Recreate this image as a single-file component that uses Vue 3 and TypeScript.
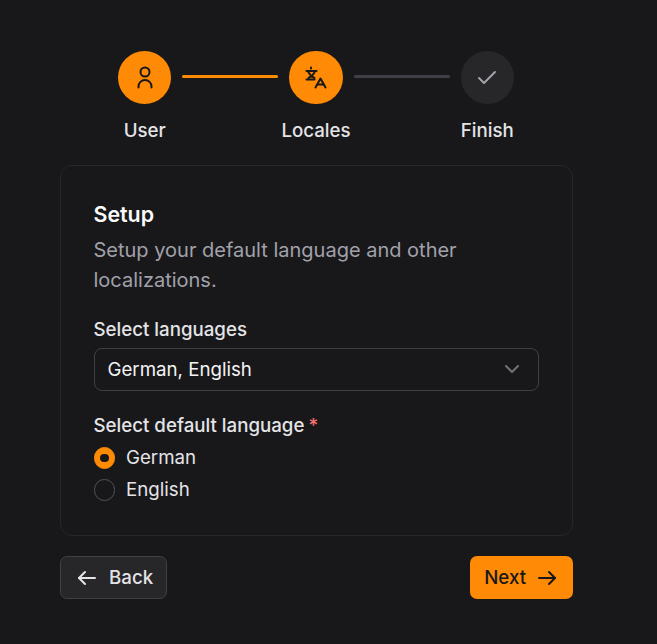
<script setup lang="ts">
const steps = ['User', 'Locales', 'Finish']
</script>

<template>
  <div class="page">
    <div class="stepper">
      <div class="step">
        <div class="circle active">
          <svg width="24" height="24" viewBox="0 0 24 24" fill="none" stroke="currentColor" stroke-width="2" stroke-linecap="round" stroke-linejoin="round">
            <circle cx="12" cy="6" r="4.5" />
            <path d="M5.5 21.5v-1a6.5 6.5 0 0 1 13 0v1" />
          </svg>
        </div>
        <span class="label">{{ steps[0] }}</span>
      </div>
      <div class="line done"></div>
      <div class="step">
        <div class="circle active">
          <svg width="24" height="24" viewBox="0 0 24 24" fill="none" stroke="currentColor" stroke-width="2" stroke-linecap="round" stroke-linejoin="round">
            <path d="M7 1.5v1" /><path d="M2.5 5h10" /><path d="M4.5 6.5c1.5 2.5 3.5 4.5 6 5.5" /><path d="M10.5 6.5c-1.5 2.5-3.500 4.500-6 5.500" /><path d="M2.500 13.500h8" />
            <path d="m11.500 21.500 5-9 5 9" /><path d="M13.500 18.500h6" />
          </svg>
        </div>
        <span class="label">{{ steps[1] }}</span>
      </div>
      <div class="line"></div>
      <div class="step">
        <div class="circle idle">
          <svg width="24" height="24" viewBox="0 0 24 24" fill="none" stroke="currentColor" stroke-width="2" stroke-linecap="round" stroke-linejoin="round">
            <path d="M20 6 9 17l-5-5" />
          </svg>
        </div>
        <span class="label">{{ steps[2] }}</span>
      </div>
    </div>

    <section class="card">
      <h2 class="title">Setup</h2>
      <p class="desc">Setup your default language and other localizations.</p>
      <div class="field">
        <div class="field-label">Select languages</div>
        <div class="select">
          <span>German, English</span>
          <svg width="24" height="24" viewBox="0 0 24 24" fill="none" stroke="currentColor" stroke-width="2" stroke-linecap="round" stroke-linejoin="round">
            <path d="m6 9 6 6 6-6" />
          </svg>
        </div>
      </div>
      <div class="field-label radio-head">Select default language<span class="req">*</span></div>
      <div class="radios">
        <div class="radio-row"><span class="radio on"></span>German</div>
        <div class="radio-row"><span class="radio"></span>English</div>
      </div>
    </section>

    <div class="actions">
      <button class="btn back">
        <svg width="24" height="24" viewBox="0 0 24 24" fill="none" stroke="currentColor" stroke-width="2" stroke-linecap="round" stroke-linejoin="round">
          <path d="M10 6l-6 6 6 6" /><path d="M20 12H4" />
        </svg>
        Back
      </button>
      <button class="btn next">
        Next
        <svg width="24" height="24" viewBox="0 0 24 24" fill="none" stroke="currentColor" stroke-width="2" stroke-linecap="round" stroke-linejoin="round">
          <path d="M4 12h16" /><path d="m14 6 6 6-6 6" />
        </svg>
      </button>
    </div>
  </div>
</template>

<style>
html, body { margin: 0; background: #18181b; }
</style>

<style scoped>
.page {
  width: 657px;
  height: 644px;
  box-sizing: border-box;
  padding: 51px 84.500px 0 59.500px;
  background: #18181b;
  font-family: Inter, sans-serif;
  color: #e4e4e7;
  overflow: hidden;
}
.stepper {
  display: flex;
  justify-content: center;
  gap: 11px;
  margin-bottom: 20px;
}
.step {
  width: 53.300px;
  display: flex;
  flex-direction: column;
  align-items: center;
  gap: 13px;
}
.circle {
  width: 53.300px;
  height: 53.300px;
  border-radius: 50%;
  display: flex;
  align-items: center;
  justify-content: center;
  flex: none;
}
.circle.active { background: #ff8a05; color: #18181b; }
.circle.idle { background: #27272a; color: #a1a1aa; }
.label { font-size: 18.700px; font-weight: 500; line-height: 28px; white-space: nowrap; }
.line {
  width: 96px;
  height: 3px;
  margin-top: 24px;
  border-radius: 2px;
  background: #3f3f46;
}
.line.done { background: #ff8a05; }
.card {
  border: 1px solid #27272a;
  border-radius: 12px;
  height: 370.500px;
  box-sizing: border-box;
  padding: 34px 33px 0;
}
.title { margin: 0; font-size: 21.400px; font-weight: 600; line-height: 28px; color: #fafafa; }
.desc { margin: 7px 0 0; font-size: 20px; line-height: 30px; color: #a1a1aa; }
.field { margin-top: 21px; }
.field-label { font-size: 18.700px; font-weight: 500; line-height: 28px; color: #e4e4e7; }
.select {
  margin-top: 4px;
  height: 42.300px;
  box-sizing: border-box;
  border: 1px solid #3f3f46;
  border-radius: 8px;
  padding: 0 14px 0 13px;
  display: flex;
  align-items: center;
  justify-content: space-between;
  font-size: 18.700px;
  color: #f4f4f5;
}
.select svg { color: #71717a; }
.radio-head { margin-top: 21.400px; }
.req { color: #f87171; margin-left: 4px; }
.radios { display: flex; flex-direction: column; gap: 4px; margin-top: 4px; }
.radio-row { display: flex; align-items: center; gap: 11px; font-size: 18.700px; line-height: 28px; }
.radio {
  width: 21.500px; height: 21.500px; box-sizing: border-box; border-radius: 50%;
  border: 1px solid #52525b; position: relative;
}
.radio.on { background: #ff8a05; border-color: #ff8a05; }
.radio.on::after {
  content: ''; position: absolute; inset: 5.500px; border-radius: 50%; background: #18181b;
}
.actions { display: flex; justify-content: space-between; margin-top: 20.500px; }
.btn {
  height: 42.500px;
  box-sizing: border-box;
  display: flex;
  align-items: center;
  gap: 8.500px;
  border-radius: 7px;
  font: 500 18.700px Inter, sans-serif;
}
.back { background: #27272a; border: 1px solid #3f3f46; color: #e4e4e7; padding: 0 13px 0 14.500px; gap: 10px; }
.next { background: #ff8a05; border: none; color: #18181b; padding: 0 14px; }
</style>
